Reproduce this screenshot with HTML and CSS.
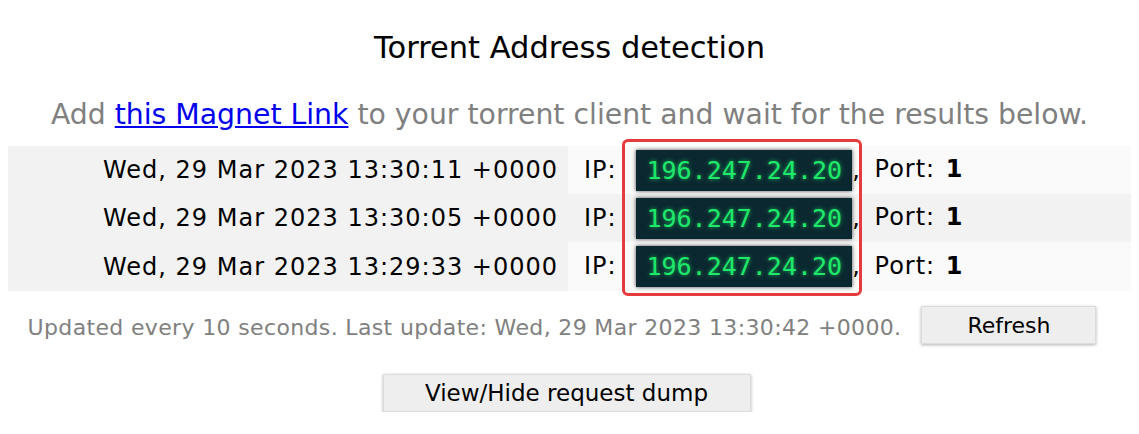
FILE: index.html
```html
<!DOCTYPE html>
<html lang="en">

<head>
    <meta charset="UTF-8">
    <meta name="viewport" content="width=device-width, initial-scale=1.0">
    <title>Torrent Address detection</title>
    <link rel="stylesheet" href="styles.css">
</head>

<body>
    <h1 class="title">Torrent Address detection</h1>
    <p class="intro">Add <a href="#">this Magnet Link</a> to your torrent client and wait for the results below.</p>

    <div class="results">
        <table class="peers">
            <tr>
                <td class="time">Wed, 29 Mar 2023 13:30:11 +0000</td>
                <td class="info">IP: <span class="ip">196.247.24.20</span>, <span class="port">Port:</span> <b>1</b></td>
            </tr>
            <tr>
                <td class="time">Wed, 29 Mar 2023 13:30:05 +0000</td>
                <td class="info">IP: <span class="ip">196.247.24.20</span>, <span class="port">Port:</span> <b>1</b></td>
            </tr>
            <tr>
                <td class="time">Wed, 29 Mar 2023 13:29:33 +0000</td>
                <td class="info">IP: <span class="ip">196.247.24.20</span>, <span class="port">Port:</span> <b>1</b></td>
            </tr>
        </table>
        <div class="highlight"></div>
    </div>

    <div class="status">
        <span class="updated">Updated every 10 seconds. Last update: Wed, 29 Mar 2023 13:30:42 +0000.</span>
        <button class="btn refresh">Refresh</button>
    </div>

    <div class="dump">
        <button class="btn dump-btn">View/Hide request dump</button>
    </div>
</body>

</html>
```

FILE: styles.css
```css
body {
    margin: 8px;
    font-family: "DejaVu Sans", Verdana, sans-serif;
    color: #000;
    background-color: #fff;
}

.title {
    margin: 0;
    padding-top: 22px;
    font-size: 30.5px;
    font-weight: normal;
    text-align: center;
    line-height: 36px;
}

.intro {
    margin: 31px 0 0;
    font-size: 28.3px;
    line-height: 36px;
    color: #808080;
    text-align: center;
}

.intro a {
    color: #0000ee;
}

.results {
    position: relative;
    margin-top: 13px;
}

.peers {
    width: 100%;
    border-collapse: collapse;
    font-size: 24px;
    letter-spacing: 1px;
}

.peers td {
    height: 48px;
    padding: 0;
}

.peers tr:last-child td {
    height: 49px;
}

.peers .time {
    width: 560px;
    padding-right: 10px;
    text-align: right;
    background-color: #f2f2f2;
    box-sizing: border-box;
}

.peers .info {
    padding-left: 16px;
    background-color: #fafafa;
}

.peers tr:nth-child(2) .info {
    background-color: #f2f2f2;
}

.ip {
    display: inline-block;
    width: 216px;
    height: 41px;
    margin-left: 11px;
    line-height: 41px;
    text-align: center;
    vertical-align: middle;
    background-color: #0b2830;
    box-shadow: 0 0 4px rgba(0, 0, 0, 0.7);
    color: #1fe86a;
    font-family: "DejaVu Sans Mono", monospace;
    font-size: 25px;
    letter-spacing: 0;
    text-shadow: 0 0 4px rgba(30, 232, 106, 0.7);
}

.port {
    margin-left: 5px;
}

.peers b {
    margin-left: 2px;
}

.highlight {
    position: absolute;
    left: 614px;
    top: -7px;
    width: 234px;
    height: 151px;
    border: 3px solid #e63b3e;
    border-radius: 6px;
}

.status {
    display: flex;
    align-items: center;
    justify-content: center;
    gap: 20px;
    margin-top: 15px;
    padding-right: 15px;
}

.updated {
    padding-top: 4px;
    font-size: 22px;
    letter-spacing: 0.35px;
    color: #808080;
}

.btn {
    font-family: "DejaVu Sans", Verdana, sans-serif;
    font-size: 22px;
    color: #000;
    background-color: #eeeeee;
    border: 1px solid #dcdcdc;
    box-shadow: 0 1px 3px rgba(0, 0, 0, 0.3);
    cursor: pointer;
}

.refresh {
    width: 175px;
    height: 38px;
}

.dump {
    text-align: center;
    margin-top: 30px;
    padding-right: 6px;
}

.dump-btn {
    width: 368px;
    height: 38px;
    font-size: 23px;
}
```
